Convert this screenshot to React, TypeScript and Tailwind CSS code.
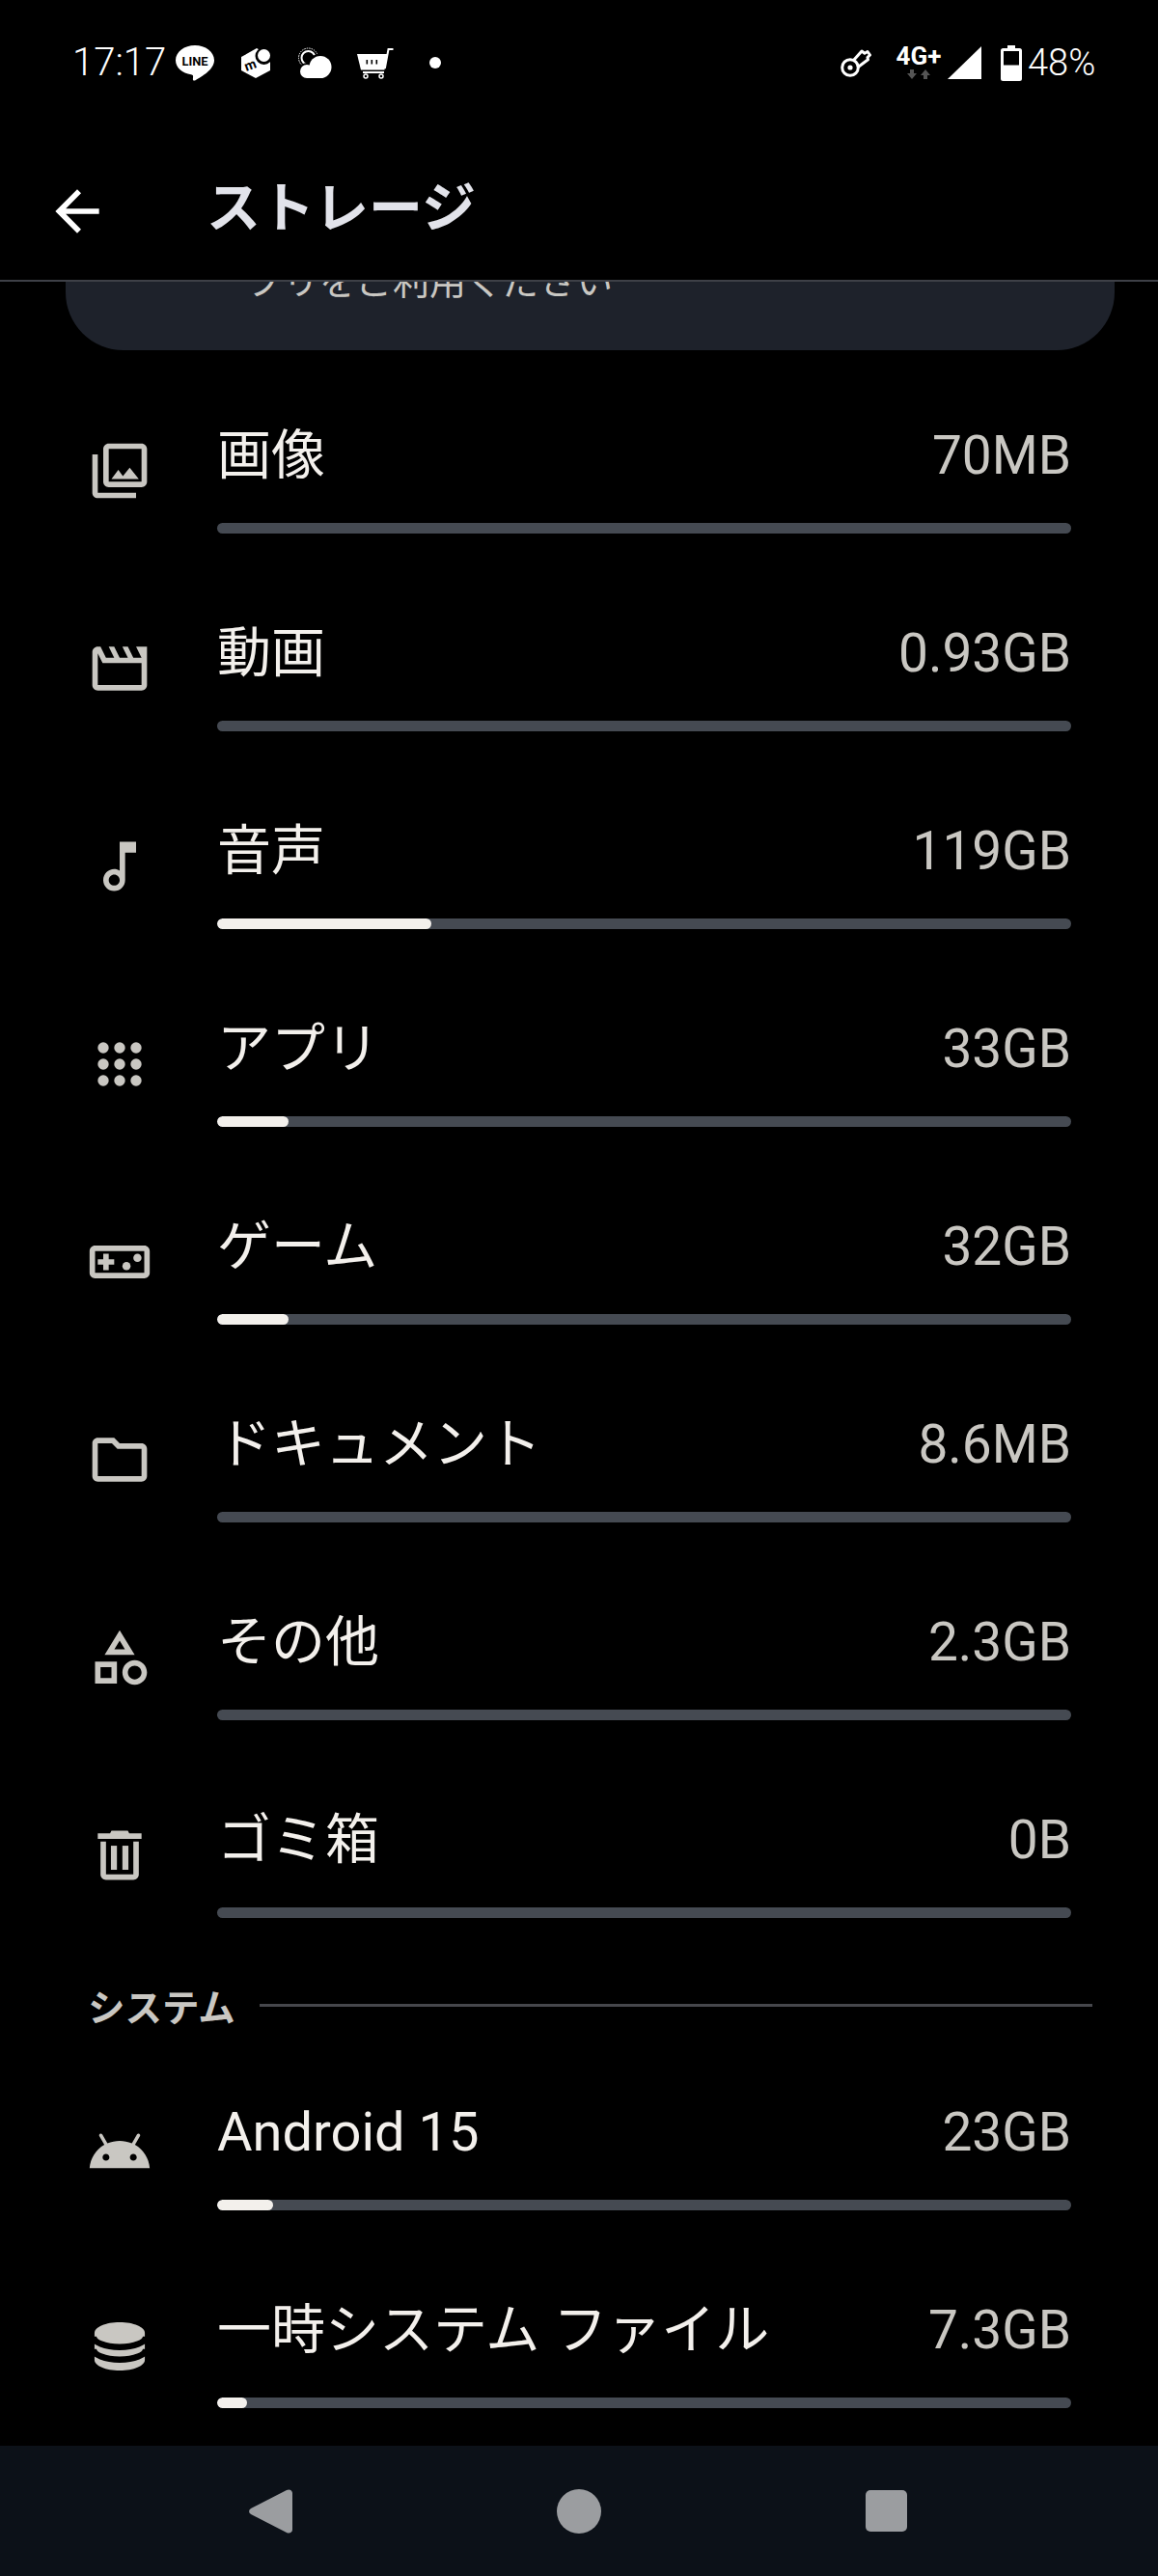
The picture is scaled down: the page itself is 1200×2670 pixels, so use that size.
import React from "react";

const FONT = "font-['Roboto','Noto_Sans_CJK_JP',sans-serif]";

const Ico = ({ children, className = "" }: { children: React.ReactNode; className?: string }) => (
  <svg viewBox="0 0 24 24" className={`w-[68px] h-[68px] ${className}`} fill="#c9c7c2">
    {children}
  </svg>
);

const icons: Record<string, React.ReactNode> = {
  image: <path d="M20 4v12H8V4h12m0-2H8c-1.1 0-2 .9-2 2v12c0 1.1.9 2 2 2h12c1.1 0 2-.9 2-2V4c0-1.1-.9-2-2-2zm-8.5 9.67l1.69 2.26 2.48-3.1L19 15H9zM2 6v14c0 1.1.9 2 2 2h14v-2H4V6H2z" />,
  video: <path d="M4 6.47L5.76 10H20v8H4V6.47M22 4h-4l2 4h-3l-2-4h-2l2 4h-3l-2-4H8l2 4H7L5 4H4c-1.1 0-1.99.9-1.99 2L2 18c0 1.1.9 2 2 2h16c1.1 0 2-.9 2-2V4z" />,
  audio: <path d="m12 3 .01 10.55c-.59-.34-1.27-.55-2-.55C7.79 13 6 14.79 6 17s1.79 4 4 4 4-1.79 4-4V7h4V3h-6zm-1.99 16c-1.1 0-2-.9-2-2s.9-2 2-2 2 .9 2 2-.9 2-2 2z" />,
  apps: (
    <>
      {[6, 12, 18].map((y) =>
        [6, 12, 18].map((x) => <circle key={`${x}-${y}`} cx={x} cy={y} r="2" />)
      )}
    </>
  ),
  game: (
    <>
      <path d="M21 6H3c-1.1 0-2 .9-2 2v8c0 1.1.9 2 2 2h18c1.1 0 2-.9 2-2V8c0-1.1-.9-2-2-2zm0 10H3V8h18v8zM6 15h2v-2h2v-2H8V9H6v2H4v2h2z" />
      <circle cx="14.5" cy="13.5" r="1.5" />
      <circle cx="18.5" cy="10.5" r="1.5" />
    </>
  ),
  folder: <path d="M9.17 6l2 2H20v10H4V6h5.17M10 4H4c-1.1 0-1.99.9-1.99 2L2 18c0 1.1.9 2 2 2h16c1.1 0 2-.9 2-2V8c0-1.1-.9-2-2-2h-8l-2-2z" />,
  other: <path d="M12 2l-5.5 9h11L12 2zm0 3.84L13.93 9h-3.87L12 5.84zM17.5 13c-2.49 0-4.5 2.01-4.5 4.5s2.01 4.5 4.5 4.5 4.5-2.01 4.5-4.5-2.01-4.5-4.5-4.5zm0 7c-1.38 0-2.5-1.12-2.5-2.5s1.12-2.5 2.5-2.5 2.5 1.12 2.5 2.5-1.12 2.5-2.5 2.5zM3 21.5h8v-8H3v8zm2-6h4v4H5v-4z" />,
  trash: (
    <>
      <path d="M15 3H9L8.5 4H4v2h16V4h-4.5zM5 7v12c0 1.1.9 2 2 2h10c1.1 0 2-.9 2-2V7h-2v12H7V7z" />
      <rect x="8.8" y="8.5" width="2.2" height="8.8" />
      <rect x="13" y="8.5" width="2.2" height="8.8" />
    </>
  ),
  android: <path d="M17.6 9.48l1.84-3.18c.16-.31.04-.69-.26-.85-.29-.15-.65-.06-.83.22l-1.88 3.24c-2.86-1.21-6.08-1.21-8.94 0L5.65 5.67c-.19-.29-.58-.38-.87-.2-.28.18-.37.54-.22.83L6.4 9.48C3.3 11.25 1.28 14.44 1 18h22c-.28-3.56-2.3-6.75-5.4-8.52zM7 15.25c-.69 0-1.25-.56-1.25-1.25s.56-1.25 1.25-1.25 1.25.56 1.25 1.25-.56 1.25-1.25 1.25zm10 0c-.69 0-1.25-.56-1.25-1.25s.56-1.25 1.25-1.25 1.25.56 1.25 1.25-.56 1.25-1.25 1.25z" transform="translate(0 1.5)" />,
  temp: (
    <>
      <path d="M2.8 7.4v9.9c0 2.15 4.1 3.9 9.2 3.9s9.2-1.75 9.2-3.9V7.4c0-2.15-4.1-3.9-9.2-3.9S2.8 5.25 2.8 7.4z" />
      <path d="M2.4 8.7c0 2.2 4.3 3.9 9.6 3.9s9.6-1.7 9.6-3.9M2.4 13.3c0 2.2 4.3 3.9 9.6 3.9s9.6-1.7 9.6-3.9" fill="none" stroke="#000" strokeWidth="2.3" />
    </>
  ),
};

const Row = ({ icon, label, value, fill = 0 }: { icon: string; label: string; value: string; fill?: number }) => (
  <div className="flex h-[205px] pr-[90px]">
    <div className="w-[225px] shrink-0 pl-[90px] pt-[44px]">
      <Ico>{icons[icon]}</Ico>
    </div>
    <div className="flex-1 min-w-0 pt-[30px]">
      <div className="flex justify-between items-center h-[64px]">
        <span className="text-[56px] leading-[64px] text-[#f3f0ec] whitespace-pre">{label}</span>
        <span className="text-[55px] leading-[64px] text-[#c9c7c2]">{value}</span>
      </div>
      <div className="mt-[38px] h-[11px] rounded-full bg-[#454a52] overflow-hidden">
        <div className="h-full rounded-full bg-[#f3f0ec]" style={{ width: fill }} />
      </div>
    </div>
  </div>
);

const StatusLeft = () => (
  <div className="flex items-center h-[40px]">
    <span className="text-[40px] leading-[40px] text-white w-[107px] font-light">17:17</span>
    <svg viewBox="0 0 40 37" className="w-[40px] h-[37px]">
      <path d="M20 0C9 0 0 6.800 0 15.500c0 7.600 7 13.400 16 14.700 1 .2 1.800.7 2 1.300.200.8-.1 2.500-.1 3.700 0 1.500 1.300 1.800 3 .8 5.500-3.300 19.100-10.800 19.100-20.500C40 6.800 31 0 20 0z" fill="#fff" />
      <text x="20" y="21" textAnchor="middle" fontSize="13" fontWeight="700" fill="#000" fontFamily="Roboto" textLength="27" lengthAdjust="spacingAndGlyphs">LINE</text>
    </svg>
    <svg viewBox="0 0 31 33" className="w-[31px] h-[33px] ml-[27px]">
      <path d="M1 10 17 1 31 9V24L16 32 1 24z" fill="#fff" />
      <circle cx="24.500" cy="9" r="9" fill="#000" />
      <circle cx="24.500" cy="8.500" r="6.500" fill="#fff" />
      <text x="11" y="23" textAnchor="middle" fontSize="14" fontWeight="700" fill="#000" fontFamily="Roboto" transform="rotate(-20 11 20)">m</text>
    </svg>
    <svg viewBox="0 0 35 33" className="w-[35px] h-[33px] ml-[29px]">
      <circle cx="10.500" cy="11" r="10" fill="none" stroke="#fff" strokeWidth="1" strokeDasharray="1.500 1" />
      <circle cx="10.500" cy="11" r="7" fill="#000" stroke="#fff" strokeWidth="2" />
      <circle cx="23" cy="20" r="13.500" fill="#000" />
      <circle cx="9" cy="25" r="9" fill="#000" />
      <circle cx="23" cy="20.500" r="11.500" fill="#fff" />
      <circle cx="9" cy="25" r="7" fill="#fff" />
      <rect x="9" y="20" width="14" height="12" fill="#fff" />
    </svg>
    <svg viewBox="0 0 38 33" className="w-[38px] h-[33px] ml-[26px]">
      <path d="M0 7h31.500L28.500 23.500H4z" fill="#fff" />
      <path d="M28.800 22 32.500 2H37.500" fill="none" stroke="#fff" strokeWidth="2" />
      <rect x="9.500" y="13" width="1.600" height="4.500" fill="#000" />
      <rect x="14.500" y="13" width="1.600" height="4.500" fill="#000" />
      <rect x="19.500" y="13" width="1.600" height="4.500" fill="#000" />
      <rect x="6" y="25" width="22" height="2" fill="#fff" />
      <circle cx="9" cy="30" r="2" fill="#000" stroke="#fff" strokeWidth="1.500" />
      <circle cx="25" cy="30" r="2" fill="#000" stroke="#fff" strokeWidth="1.500" />
    </svg>
    <div className="w-[12px] h-[12px] rounded-full bg-white ml-[37px]" />
  </div>
);

const StatusRight = () => (
  <div className="flex items-center h-[40px]">
    <svg viewBox="0 0 32 30" className="w-[32px] h-[30px] mx-[5px]">
      <circle cx="10" cy="20" r="8.300" fill="none" stroke="#fff" strokeWidth="3" />
      <circle cx="10" cy="20" r="2.600" fill="#fff" />
      <path d="M13.500 12.500 22 3l3 2.200L28 3.500 30.500 7 28 9.500l.5 2.300L17.500 20" fill="none" stroke="#fff" strokeWidth="3" strokeLinejoin="round" />
    </svg>
    <div className="w-[48px] ml-[20px] flex flex-col items-center -mt-[2px]">
      <span className="text-[26px] leading-[24px] font-bold text-white whitespace-nowrap">4G+</span>
      <svg viewBox="0 0 24 10" className="w-[24px] h-[10px] mt-[2px]" fill="#555">
        <path d="M3 0h4v4h3L5 10 0 4h3zM17 10h4V6h3L19 0l-5 6h3z" />
      </svg>
    </div>
    <svg viewBox="0 0 35 34" className="w-[35px] h-[34px] ml-[6px]">
      <path d="M35 0v34H0z" fill="#fff" />
    </svg>
    <svg viewBox="0 0 22 37" className="w-[22px] h-[37px] ml-[20px]">
      <path fillRule="evenodd" d="M7 0h8v3h4.500A2.500 2.500 0 0 1 22 5.500v29a2.500 2.500 0 0 1-2.500 2.500h-17A2.500 2.500 0 0 1 0 34.500v-29A2.500 2.500 0 0 1 2.500 3H7zM3 6v14.500h16V6z" fill="#fff" />
    </svg>
    <span className="text-[38px] leading-[40px] text-white ml-[6px] w-[72px] font-light whitespace-nowrap">48%</span>
  </div>
);

export default function App() {
  return (
    <div className={`w-[1200px] h-[2670px] bg-black flex flex-col overflow-hidden ${FONT}`}>
      <header className="shrink-0 h-[292px] border-b-2 border-[#3e4047] bg-black flex flex-col">
        <div className="h-[130px] pt-[45px] pl-[75px] pr-[63px] flex justify-between items-start">
          <StatusLeft />
          <StatusRight />
        </div>
        <div className="flex-1 flex items-start">
          <svg viewBox="0 0 24 24" className="w-[68px] h-[68px] ml-[46px] mt-[55px]" fill="#fff">
            <path d="M20 11H7.830l5.590-5.590L12 4l-8 8 8 8 1.410-1.410L7.830 13H20v-2z" />
          </svg>
          <h1 className="ml-[100px] mt-[51px] text-[56px] leading-[70px] font-bold text-[#e2e3ea] whitespace-nowrap">ストレージ</h1>
        </div>
      </header>

      <main className="flex-1 min-h-0 overflow-hidden">
        <div className="ml-[68px] mr-[45px] h-[71px] bg-[#1e222b] rounded-b-[60px] overflow-hidden pl-[187px]">
          <p className="-mt-[28px] text-[38px] leading-[56px] text-[#c9c7c2] whitespace-nowrap">プリをご利用ください</p>
        </div>
        <div className="mt-[47px]">
          <Row icon="image" label="画像" value="70MB" />
          <Row icon="video" label="動画" value="0.93GB" />
          <Row icon="audio" label="音声" value="119GB" fill={222} />
          <Row icon="apps" label="アプリ" value="33GB" fill={74} />
          <Row icon="game" label="ゲーム" value="32GB" fill={74} />
          <Row icon="folder" label="ドキュメント" value="8.6MB" />
          <Row icon="other" label="その他" value="2.3GB" />
          <Row icon="trash" label="ゴミ箱" value="0B" />
          <div className="h-[98px] pl-[91px] pr-[68px] pt-[10px] flex items-start">
            <span className="text-[38.5px] leading-[44px] font-bold text-[#c9c7c2] whitespace-nowrap">システム</span>
            <div className="ml-[25px] mt-[17px] flex-1 h-[3px] bg-[#46474c]" />
          </div>
          <Row icon="android" label="Android 15" value="23GB" fill={58} />
          <Row icon="temp" label="一時システム ファイル" value="7.3GB" fill={31} />
        </div>
      </main>

      <nav className="shrink-0 h-[135px] bg-[#0c1118] flex items-center pl-[258px]">
        <svg viewBox="0 0 46 46" className="w-[46px] h-[46px]" fill="#9b9da0">
          <path d="M2 20 39 1c3-1.500 6 .5 6 3v38c0 2.500-3 4.500-6 3L2 26c-2.500-1.500-2.500-4.500 0-6z" />
        </svg>
        <div className="w-[46px] h-[46px] ml-[273px] rounded-full bg-[#9b9da0]" />
        <div className="w-[43px] h-[43px] ml-[274px] rounded-[5px] bg-[#9b9da0]" />
      </nav>
    </div>
  );
}
